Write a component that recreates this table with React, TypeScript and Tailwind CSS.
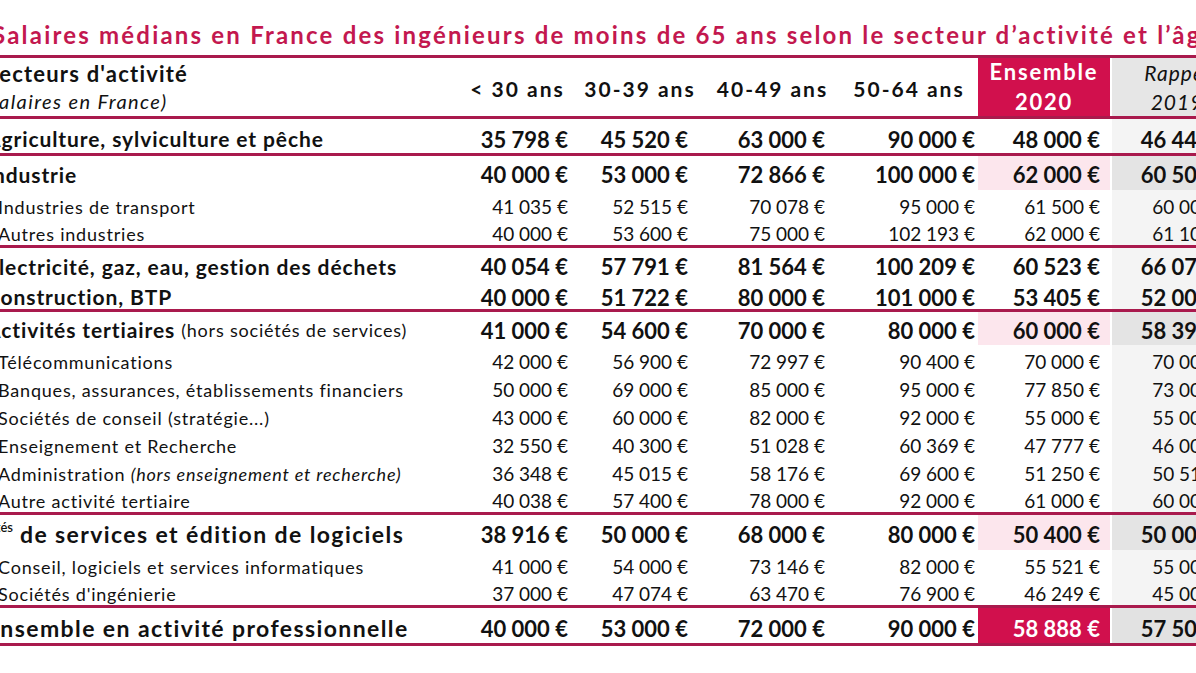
import type { ReactNode } from 'react';

type Kind = 'head' | 'bold' | 'sub' | 'total';

type Row = {
  label: ReactNode;
  values: string[];
  kind: Kind;
  h: string;
  big?: boolean;
};

const label = "font-['Lato','Noto_Sans',sans-serif]";
const num = "font-['Lato','Liberation_Sans',sans-serif] tabular-nums";

// widths / paddings of the six number columns
const cols = [
  'w-[115px] pr-[7px]',
  'w-[130px] pr-[17px]',
  'w-[135px] pr-[15px]',
  'w-[138px] pr-[3px]',
  'w-[132px] pr-[10px]',
  'w-[130px] pr-[14px]',
];

const ensembleBg: Record<Kind, string> = {
  head: 'bg-[#fce6ed]',
  bold: 'bg-white',
  sub: 'bg-white',
  total: 'bg-[#d1104d]',
};

const rappelBg: Record<Kind, string> = {
  head: 'bg-[#e4e4e4]',
  bold: 'bg-[#f4f4f4]',
  sub: 'bg-[#f4f4f4]',
  total: 'bg-[#e2e2e2]',
};

function TableRow({ row }: { row: Row }) {
  const strong = row.kind !== 'sub';
  const labelSize = row.big
    ? 'text-[23px] font-bold tracking-[1.4px]'
    : strong
      ? 'text-[21px] font-bold tracking-[0.9px]'
      : 'text-[18px] tracking-[0.8px] pl-[12px]';
  const pad = row.kind === 'head' ? 'pt-[3px]' : 'pt-[6px]';
  return (
    <div className={`flex items-stretch ${row.h}`}>
      <div
        className={`w-[474px] -ml-[14px] flex items-center ${pad} whitespace-nowrap text-[#111] ${label} ${labelSize}`}
      >
        {row.label}
      </div>
      {row.values.map((v, i) => (
        <div
          key={i}
          className={`${cols[i]} flex items-center justify-end ${pad} whitespace-nowrap ${num} ${
            strong ? 'text-[22px] font-bold' : 'text-[19px]'
          } ${i === 4 ? ensembleBg[row.kind] : i === 5 ? `ml-[2px] ${rappelBg[row.kind]}` : ''}`}
        >
          <span className={i === 4 && row.kind === 'total' ? 'text-white' : 'text-[#111]'}>{v}</span>
        </div>
      ))}
    </div>
  );
}

function Group({ rows }: { rows: Row[] }) {
  return (
    <div className="border-b-[3px] border-[#a91a4d]">
      {rows.map((r, i) => (
        <TableRow key={i} row={r} />
      ))}
    </div>
  );
}

const groups: Row[][] = [
  [
    {
      label: 'Agriculture, sylviculture et pêche',
      values: ['35 798 €', '45 520 €', '63 000 €', '90 000 €', '48 000 €', '46 442 €'],
      kind: 'bold',
      h: 'h-[34px]',
    },
  ],
  [
    {
      label: 'Industrie',
      values: ['40 000 €', '53 000 €', '72 866 €', '100 000 €', '62 000 €', '60 500 €'],
      kind: 'head',
      h: 'h-[34px]',
    },
    {
      label: 'Industries de transport',
      values: ['41 035 €', '52 515 €', '70 078 €', '95 000 €', '61 500 €', '60 000 €'],
      kind: 'sub',
      h: 'h-[28px]',
    },
    {
      label: 'Autres industries',
      values: ['40 000 €', '53 600 €', '75 000 €', '102 193 €', '62 000 €', '61 100 €'],
      kind: 'sub',
      h: 'h-[27px]',
    },
  ],
  [
    {
      label: 'Électricité, gaz, eau, gestion des déchets',
      values: ['40 054 €', '57 791 €', '81 564 €', '100 209 €', '60 523 €', '66 071 €'],
      kind: 'bold',
      h: 'h-[31px]',
    },
    {
      label: 'Construction, BTP',
      values: ['40 000 €', '51 722 €', '80 000 €', '101 000 €', '53 405 €', '52 000 €'],
      kind: 'bold',
      h: 'h-[30px]',
    },
  ],
  [
    {
      label: (
        <>
          Activités tertiaires&nbsp;
          <span className="text-[18px] font-normal tracking-[0.8px]">(hors sociétés de services)</span>
        </>
      ),
      values: ['41 000 €', '54 600 €', '70 000 €', '80 000 €', '60 000 €', '58 397 €'],
      kind: 'head',
      h: 'h-[33px]',
    },
    {
      label: 'Télécommunications',
      values: ['42 000 €', '56 900 €', '72 997 €', '90 400 €', '70 000 €', '70 000 €'],
      kind: 'sub',
      h: 'h-[28px]',
    },
    {
      label: 'Banques, assurances, établissements financiers',
      values: ['50 000 €', '69 000 €', '85 000 €', '95 000 €', '77 850 €', '73 000 €'],
      kind: 'sub',
      h: 'h-[28px]',
    },
    {
      label: 'Sociétés de conseil (stratégie...)',
      values: ['43 000 €', '60 000 €', '82 000 €', '92 000 €', '55 000 €', '55 000 €'],
      kind: 'sub',
      h: 'h-[28px]',
    },
    {
      label: 'Enseignement et Recherche',
      values: ['32 550 €', '40 300 €', '51 028 €', '60 369 €', '47 777 €', '46 000 €'],
      kind: 'sub',
      h: 'h-[28px]',
    },
    {
      label: (
        <>
          Administration&nbsp;<span className="italic">(hors enseignement et recherche)</span>
        </>
      ),
      values: ['36 348 €', '45 015 €', '58 176 €', '69 600 €', '51 250 €', '50 510 €'],
      kind: 'sub',
      h: 'h-[28px]',
    },
    {
      label: 'Autre activité tertiaire',
      values: ['40 038 €', '57 400 €', '78 000 €', '92 000 €', '61 000 €', '60 000 €'],
      kind: 'sub',
      h: 'h-[27px]',
    },
  ],
  [
    {
      label: (
        <>
          <span className="relative -top-[6px] -ml-[25px] w-[52px] inline-block text-right text-[13px] font-semibold tracking-normal">
            Sociétés
          </span>
          &nbsp;de services et édition de logiciels
        </>
      ),
      values: ['38 916 €', '50 000 €', '68 000 €', '80 000 €', '50 400 €', '50 000 €'],
      kind: 'head',
      h: 'h-[35px]',
      big: true,
    },
    {
      label: 'Conseil, logiciels et services informatiques',
      values: ['41 000 €', '54 000 €', '73 146 €', '82 000 €', '55 521 €', '55 000 €'],
      kind: 'sub',
      h: 'h-[28px]',
    },
    {
      label: "Sociétés d'ingénierie",
      values: ['37 000 €', '47 074 €', '63 470 €', '76 900 €', '46 249 €', '45 000 €'],
      kind: 'sub',
      h: 'h-[27px]',
    },
  ],
  [
    {
      label: 'Ensemble en activité professionnelle',
      values: ['40 000 €', '53 000 €', '72 000 €', '90 000 €', '58 888 €', '57 500 €'],
      kind: 'total',
      h: 'h-[35px]',
      big: true,
    },
  ],
];

export default function App() {
  return (
    <div className="w-[1196px] h-[673px] overflow-hidden bg-white">
      <div
        className={`h-[55px] flex items-center pt-[14px] -ml-[8px] whitespace-nowrap text-[24px] font-bold tracking-[2.2px] text-[#c3184f] ${label}`}
      >
        Salaires médians en France des ingénieurs de moins de 65 ans selon le secteur d’activité et l’âge
      </div>

      <div className="w-[1260px] border-t-[3px] border-[#a91a4d]">
        {/* header */}
        <div className="flex h-[61px] border-b-[3px] border-[#a91a4d]">
          <div className={`w-[474px] -ml-[14px] flex flex-col justify-center whitespace-nowrap text-[#111] ${label}`}>
            <span className="text-[22px] font-bold tracking-[1.2px] leading-[28px]">Secteurs d'activité</span>
            <span className="text-[20px] italic tracking-[1.4px] leading-[27px] -ml-[5px]">(Salaires en France)</span>
          </div>
          {['< 30 ans', '30-39 ans', '40-49 ans', '50-64 ans'].map((t, i) => (
            <div
              key={t}
              className={`${cols[i].split(' ')[0]} flex items-center justify-center pt-[3px] whitespace-nowrap text-[21px] font-bold tracking-[2px] text-[#111] ${label}`}
            >
              {t}
            </div>
          ))}
          <div
            className={`w-[132px] bg-[#d1104d] text-white flex flex-col items-center justify-center text-[22px] font-bold tracking-[1.8px] leading-[30px] ${label}`}
          >
            <span>Ensemble</span>
            <span>2020</span>
          </div>
          <div
            className={`w-[130px] ml-[2px] bg-[#e6e6e6] text-[#111] flex flex-col items-center justify-center text-[21px] italic tracking-[1px] leading-[29px] ${label}`}
          >
            <span>Rappel</span>
            <span>2019</span>
          </div>
        </div>

        {groups.map((g, i) => (
          <Group key={i} rows={g} />
        ))}
      </div>
    </div>
  );
}
